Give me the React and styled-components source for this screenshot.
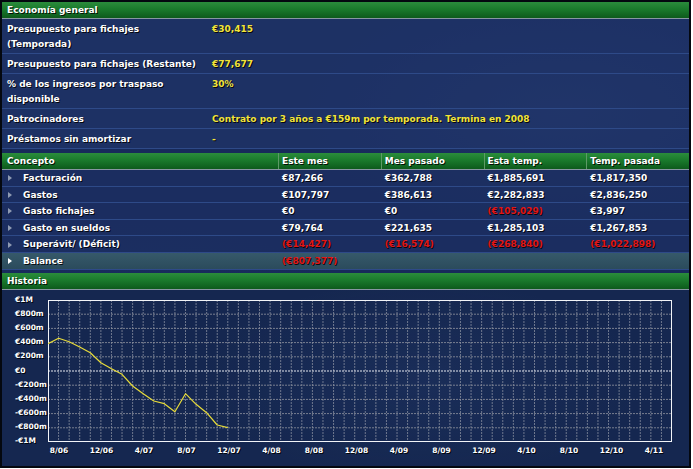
import React from "react";
import styled, { createGlobalStyle } from "styled-components";

const GlobalStyle = createGlobalStyle`
  html, body {
    margin: 0;
    padding: 0;
    background: #ffffff;
  }
  body {
    font-family: "DejaVu Sans", Verdana, sans-serif;
  }
`;

const Frame = styled.div`
  width: 691px;
  height: 468px;
  box-sizing: border-box;
  border: 2px solid #04080f;
  background:
    radial-gradient(ellipse 260px 120px at 560px 110px, rgba(60, 90, 150, 0.18), transparent),
    radial-gradient(ellipse 300px 160px at 120px 380px, rgba(40, 70, 130, 0.2), transparent),
    #172a5a;
  display: flex;
  flex-direction: column;
  font-size: 9px;
  font-weight: bold;
  color: #ffffff;
  text-shadow: 1px 1px 0 rgba(0, 0, 0, 0.85);
  overflow: hidden;
`;

const SectionBar = styled.div`
  height: 16px;
  line-height: 16px;
  padding-left: 5px;
  background: linear-gradient(#2b8c3c, #1a7a2c 45%, #0d5a1c);
  border-bottom: 1px solid #8796a2;
  margin-top: ${({ $gap }) => $gap || 0}px;
  flex-shrink: 0;
`;

const InfoList = styled.div`
  display: flex;
  flex-direction: column;
  margin-bottom: 4px;
`;

const InfoRow = styled.div`
  display: grid;
  grid-template-columns: 193px 1fr;
  column-gap: 12px;
  padding: 3px 0 1px 5px;
  line-height: 15px;
  border-bottom: 1px solid #2e4a88;
  background: rgba(34, 54, 110, 0.55);
`;

const InfoValue = styled.div`
  color: #f2e43a;
`;

const Table = styled.div`
  display: flex;
  flex-direction: column;
`;

const TableHead = styled.div`
  display: grid;
  grid-template-columns: 276px repeat(4, 1fr);
  height: 16px;
  line-height: 16px;
  background: linear-gradient(#2b8c3c, #1a7a2c 45%, #0d5a1c);
  border-bottom: 1px solid #8796a2;
`;

const HeadCell = styled.div`
  padding-left: ${({ $first }) => ($first ? 5 : 3)}px;
  border-left: ${({ $first }) => ($first ? "none" : "1px solid #5d9a66")};
`;

const TableRow = styled.div`
  display: grid;
  grid-template-columns: 276px repeat(4, 1fr);
  height: 15.6px;
  line-height: 16.6px;
  border-bottom: 1px solid #2e4a88;
  background: ${({ $active }) =>
    $active
      ? "linear-gradient(#36596a, #2b4b5c)"
      : "rgba(30, 48, 100, 0.6)"};
`;

const ConceptCell = styled.div`
  display: flex;
  align-items: center;
  padding-left: 6px;
  gap: 11px;
`;

const Arrow = styled.span`
  width: 0;
  height: 0;
  border-top: 3.5px solid transparent;
  border-bottom: 3.5px solid transparent;
  border-left: 4px solid ${({ $active }) => ($active ? "#ffffff" : "#8e9ab2")};
`;

const ValueCell = styled.div`
  padding-left: 4px;
  color: ${({ $neg }) => ($neg ? "#e21515" : "#ffffff")};
`;

const ChartArea = styled.div`
  flex: 1;
  display: grid;
  grid-template-columns: 46px 624px;
  grid-template-rows: 142px auto;
  padding-top: 10px;
  background:
    radial-gradient(ellipse 220px 100px at 420px 90px, rgba(60, 90, 150, 0.12), transparent),
    #152750;
`;

const YAxis = styled.div`
  display: flex;
  flex-direction: column;
  margin-top: -7px;
  padding-left: 13px;
  font-size: 7.5px;
`;

const YLabel = styled.div`
  height: 14.2px;
  line-height: 14.2px;
`;

const XAxis = styled.div`
  grid-column: 1 / -1;
  display: flex;
  padding-left: 35.75px;
  font-size: 7.5px;
  height: 16px;
  line-height: 17px;
`;

const XLabel = styled.div`
  width: 42.5px;
  flex-shrink: 0;
  text-align: center;
`;

const info = [
  ["Presupuesto para fichajes (Temporada)", "€30,415"],
  ["Presupuesto para fichajes (Restante)", "€77,677"],
  ["% de los ingresos por traspaso disponible", "30%"],
  ["Patrocinadores", "Contrato por 3 años a €159m por temporada. Termina en 2008"],
  ["Préstamos sin amortizar", "-"],
];

const rows = [
  ["Facturación", "€87,266", "€362,788", "€1,885,691", "€1,817,350"],
  ["Gastos", "€107,797", "€386,613", "€2,282,833", "€2,836,250"],
  ["Gasto fichajes", "€0", "€0", "(€105,029)", "€3,997"],
  ["Gasto en sueldos", "€79,764", "€221,635", "€1,285,103", "€1,267,853"],
  ["Superávit/ (Déficit)", "(€14,427)", "(€16,574)", "(€268,840)", "(€1,022,898)"],
  ["Balance", "(€807,377)", "", "", ""],
];

const yLabels = ["€1M", "€800m", "€600m", "€400m", "€200m", "€0", "-€200m", "-€400m", "-€600m", "-€800m", "-€1M"];
const xLabels = ["8/06", "12/06", "4/07", "8/07", "12/07", "4/08", "8/08", "12/08", "4/09", "8/09", "12/09", "4/10", "8/10", "12/10", "4/11"];

const balance = [43.7, 38.3, 41.7, 47, 52.7, 62.7, 68.7, 74.3, 86, 93.7, 101, 103.7, 111.7, 93.7, 104.3, 112.7, 125, 127.7];

const W = 624;
const H = 142;
const MONTH = W / 59;

const HistoryPlot = () => {
  const points = balance.map((y, i) => `${(i * MONTH).toFixed(1)},${y}`).join(" ");
  return (
    <svg width={W} height={H} viewBox={`0 0 ${W} ${H}`}>
      {Array.from({ length: 58 }, (_, j) => (
        <line
          key={`v${j}`}
          x1={(j + 1) * MONTH}
          x2={(j + 1) * MONTH}
          y1={0}
          y2={H}
          stroke="#858c9e"
          strokeWidth="1"
          strokeDasharray="2 1"
          opacity="0.8"
        />
      ))}
      {Array.from({ length: 9 }, (_, i) => (
        <line
          key={`h${i}`}
          x1={0}
          x2={W}
          y1={(i + 1) * 14.2}
          y2={(i + 1) * 14.2}
          stroke={i === 4 ? "#e6e9f0" : "#8a8f9c"}
          strokeWidth="1"
          strokeDasharray="2 1"
          opacity={i === 4 ? 1 : 0.85}
        />
      ))}
      <rect x="0.5" y="0.5" width={W - 1} height={H - 1} fill="none" stroke="#f2f4f8" strokeWidth="1" />
      <polyline points={points} fill="none" stroke="#e8dc3a" strokeWidth="1.2" strokeLinejoin="round" />
    </svg>
  );
};

export default function App() {
  return (
    <>
      <GlobalStyle />
      <Frame>
        <SectionBar>Economía general</SectionBar>
        <InfoList>
          {info.map(([label, value]) => (
            <InfoRow key={label}>
              <div>{label}</div>
              <InfoValue>{value}</InfoValue>
            </InfoRow>
          ))}
        </InfoList>
        <Table>
          <TableHead>
            <HeadCell $first>Concepto</HeadCell>
            <HeadCell>Este mes</HeadCell>
            <HeadCell>Mes pasado</HeadCell>
            <HeadCell>Esta temp.</HeadCell>
            <HeadCell>Temp. pasada</HeadCell>
          </TableHead>
          {rows.map(([label, ...values]) => {
            const active = label === "Balance";
            return (
              <TableRow key={label} $active={active}>
                <ConceptCell>
                  <Arrow $active={active} />
                  <span>{label}</span>
                </ConceptCell>
                {values.map((v, i) => (
                  <ValueCell key={i} $neg={v.startsWith("(")}>
                    {v}
                  </ValueCell>
                ))}
              </TableRow>
            );
          })}
        </Table>
        <SectionBar $gap={3}>Historia</SectionBar>
        <ChartArea>
          <YAxis>
            {yLabels.map((l) => (
              <YLabel key={l}>{l}</YLabel>
            ))}
          </YAxis>
          <HistoryPlot />
          <XAxis>
            {xLabels.map((l) => (
              <XLabel key={l}>{l}</XLabel>
            ))}
          </XAxis>
        </ChartArea>
      </Frame>
    </>
  );
}
